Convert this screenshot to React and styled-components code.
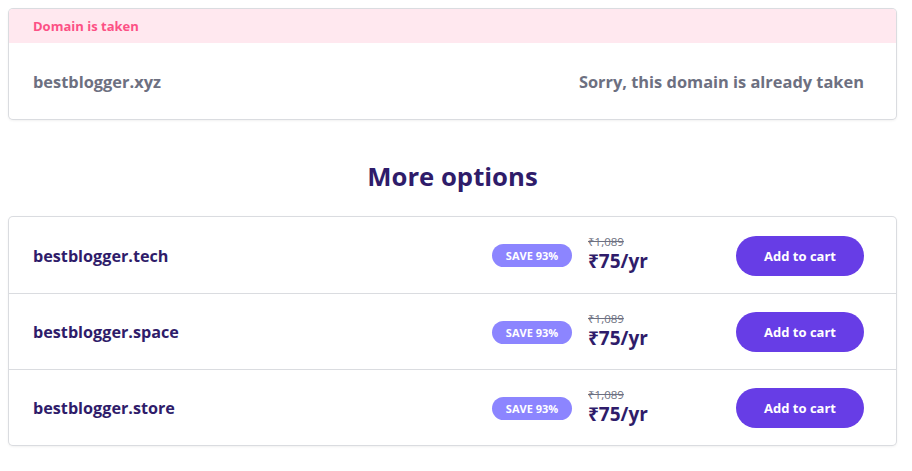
import React from "react"
import styled, { createGlobalStyle } from "styled-components"

const GlobalStyle = createGlobalStyle`
  body {
    margin: 0;
    background: #fff;
    font-family: "Open Sans", "Noto Sans", sans-serif;
  }
`

const Page = styled.div`
  padding: 9px 16px 20px 9px;
  width: 887px;
`

const Card = styled.section`
  border-radius: 4px;
  background: #fff;
  box-shadow: 0 0 0 1px #dadce0, 0 1px 3px rgba(29, 30, 32, 0.12);
  overflow: hidden;
`

const AlertHead = styled.div`
  background: #ffe8ef;
  color: #fc5185;
  font-size: 13px;
  font-weight: 700;
  height: 34px;
  display: flex;
  align-items: center;
  padding: 0 24px;
`

const AlertBody = styled.div`
  height: 76px;
  padding: 1px 32px 0 24px;
  box-sizing: border-box;
  display: flex;
  align-items: center;
  justify-content: space-between;
  color: #6d7081;
  font-size: 16.4px;
  font-weight: 700;
`

const Heading = styled.h2`
  margin: 0;
  height: 98px;
  padding-top: 16px;
  box-sizing: border-box;
  display: flex;
  align-items: center;
  justify-content: center;
  color: #2f1c6a;
  font-size: 25.7px;
  font-weight: 700;
`

const Row = styled.div`
  height: 76px;
  display: flex;
  align-items: center;
  padding: 1px 32px 0 24px;
  box-sizing: border-box;
  border-top: ${(p) => (p.first ? "none" : "1px solid #dadce0")};
`

const Name = styled.div`
  flex: 1;
  color: #2f1c6a;
  font-size: 16.2px;
  font-weight: 700;
`

const Badge = styled.span`
  background: #8c85ff;
  color: #fff;
  font-size: 11px;
  font-weight: 700;
  height: 23px;
  width: 80px;
  border-radius: 12px;
  display: flex;
  align-items: center;
  justify-content: center;
`

const Price = styled.div`
  width: 148px;
  margin-left: 16px;
  display: flex;
  flex-direction: column;
  margin-top: -3px;
`

const OldPrice = styled.span`
  color: #6d7081;
  font-size: 11.5px;
  text-decoration: line-through;
  line-height: 14px;
`

const NewPrice = styled.span`
  color: #2f1c6a;
  font-size: 19px;
  font-weight: 700;
  line-height: 24px;
`

const CartButton = styled.button`
  width: 128px;
  height: 40px;
  border: none;
  border-radius: 20px;
  background: #673de6;
  color: #fff;
  font-family: inherit;
  font-size: 13px;
  font-weight: 700;
  cursor: pointer;
`

const options = ["bestblogger.tech", "bestblogger.space", "bestblogger.store"]

function App() {
  return (
    <Page>
      <GlobalStyle />
      <Card>
        <AlertHead>Domain is taken</AlertHead>
        <AlertBody>
          <span>bestblogger.xyz</span>
          <span>Sorry, this domain is already taken</span>
        </AlertBody>
      </Card>
      <Heading>More options</Heading>
      <Card>
        {options.map((name, index) => (
          <Row key={name} first={index === 0}>
            <Name>{name}</Name>
            <Badge>SAVE 93%</Badge>
            <Price>
              <OldPrice>₹1,089</OldPrice>
              <NewPrice>₹75/yr</NewPrice>
            </Price>
            <CartButton>Add to cart</CartButton>
          </Row>
        ))}
      </Card>
    </Page>
  )
}

export default App
